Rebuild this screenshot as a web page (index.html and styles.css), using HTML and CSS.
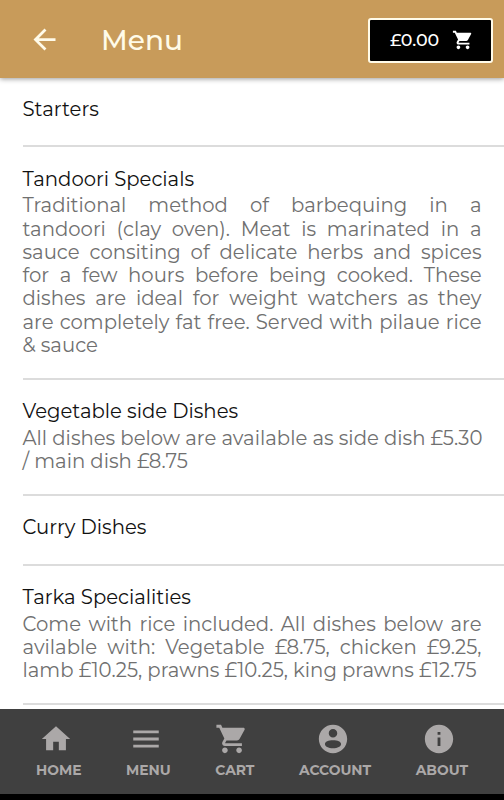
FILE: index.html
```
<!DOCTYPE html>
<html lang="en">
<head>
    <meta charset="UTF-8">
    <meta name="viewport" content="width=device-width, initial-scale=1.0">
    <title>Menu</title>
    <link rel="stylesheet" href="styles.css">
</head>
<body>
    <header class="header">
        <svg class="back" viewBox="0 0 24 24"><path d="M20 11H7.83l5.59-5.59L12 4l-8 8 8 8 1.41-1.41L7.83 13H20v-2z"/></svg>
        <h1>Menu</h1>
        <button class="basket">
            <span>£0.00</span>
            <svg viewBox="0 0 24 24"><path d="M7 18c-1.1 0-1.99.9-1.99 2S5.9 22 7 22s2-.9 2-2-.9-2-2-2zM1 2v2h2l3.6 7.59-1.35 2.45c-.16.28-.25.61-.25.96 0 1.1.9 2 2 2h12v-2H7.42c-.14 0-.25-.11-.25-.25l.03-.12.9-1.63h7.45c.75 0 1.41-.41 1.75-1.03l3.58-6.49c.08-.14.12-.31.12-.48 0-.55-.45-1-1-1H5.21l-.94-2H1zm16 16c-1.1 0-1.99.9-1.99 2s.89 2 1.99 2 2-.9 2-2-.9-2-2-2z"/></svg>
        </button>
    </header>

    <main class="list">
        <section class="category first">
            <h2>Starters</h2>
        </section>
        <section class="category">
            <h2>Tandoori Specials</h2>
            <p>
                <span>Traditional method of barbequing in a</span>
                <span>tandoori (clay oven). Meat is marinated in a</span>
                <span>sauce consiting of delicate herbs and spices</span>
                <span>for a few hours before being cooked. These</span>
                <span>dishes are ideal for weight watchers as they</span>
                <span>are completely fat free. Served with pilaue rice</span>
                <span class="last">&amp; sauce</span>
            </p>
        </section>
        <section class="category">
            <h2>Vegetable side Dishes</h2>
            <p>
                <span>All dishes below are available as side dish £5.30</span>
                <span class="last">/ main dish £8.75</span>
            </p>
        </section>
        <section class="category">
            <h2>Curry Dishes</h2>
        </section>
        <section class="category">
            <h2>Tarka Specialities</h2>
            <p>
                <span>Come with rice included. All dishes below are</span>
                <span>avilable with: Vegetable £8.75, chicken £9.25,</span>
                <span class="last">lamb £10.25, prawns £10.25, king prawns £12.75</span>
            </p>
        </section>
    </main>

    <nav class="tabs">
        <a class="tab">
            <svg viewBox="0 0 24 24"><path d="M10 20v-6h4v6h5v-8h3L12 3 2 12h3v8z"/></svg>
            <span>HOME</span>
        </a>
        <a class="tab">
            <svg viewBox="0 0 24 24"><path d="M3 18h18v-2H3v2zm0-5h18v-2H3v2zm0-7v2h18V6H3z"/></svg>
            <span>MENU</span>
        </a>
        <a class="tab">
            <svg viewBox="0 0 24 24"><path d="M7 18c-1.1 0-1.99.9-1.99 2S5.9 22 7 22s2-.9 2-2-.9-2-2-2zM1 2v2h2l3.6 7.59-1.35 2.45c-.16.28-.25.61-.25.96 0 1.1.9 2 2 2h12v-2H7.42c-.14 0-.25-.11-.25-.25l.03-.12.9-1.63h7.45c.75 0 1.41-.41 1.75-1.03l3.58-6.49c.08-.14.12-.31.12-.48 0-.55-.45-1-1-1H5.21l-.94-2H1zm16 16c-1.1 0-1.99.9-1.99 2s.89 2 1.99 2 2-.9 2-2-.9-2-2-2z"/></svg>
            <span>CART</span>
        </a>
        <a class="tab">
            <svg viewBox="0 0 24 24"><path d="M12 2C6.480 2 2 6.480 2 12s4.480 10 10 10 10-4.480 10-10S17.520 2 12 2zm0 3c1.660 0 3 1.340 3 3s-1.340 3-3 3-3-1.340-3-3 1.340-3 3-3zM12 18.600c-3.300 0-5.700-1.500-5.700-3.100s2.400-2.700 5.700-2.700 5.700 1.100 5.700 2.700-2.400 3.100-5.700 3.100z" fill-rule="evenodd"/></svg>
            <span>ACCOUNT</span>
        </a>
        <a class="tab">
            <svg viewBox="0 0 24 24"><path d="M12 2C6.480 2 2 6.480 2 12s4.480 10 10 10 10-4.480 10-10S17.520 2 12 2zm1 15h-2v-6h2v6zm0-8h-2V7h2v2z"/></svg>
            <span>ABOUT</span>
        </a>
    </nav>
</body>
</html>
```
FILE: styles.css
```
* {
    box-sizing: border-box;
}
body {
    font-family: Montserrat, Inter, "Open Sans", sans-serif;
    background-color: #fff;
    margin: 0;
    height: 800px;
    display: flex;
    flex-direction: column;
    overflow: hidden;
}
h1, h2, p {
    margin: 0;
    font-weight: 400;
}
svg {
    fill: currentColor;
    display: block;
    flex: none;
}
.header {
    flex: none;
    height: 78px;
    padding: 0 11px 0 28px;
    display: flex;
    align-items: center;
    background-color: #c89b5a;
    color: #fffbe9;
    box-shadow: 0 1px 5px rgba(0, 0, 0, 0.4);
}
.back {
    width: 33px;
    height: 33px;
}
.header h1 {
    margin: 1px 0 0 40px;
    font-size: 28px;
    font-weight: 500;
}
.basket {
    width: 125px;
    height: 45px;
    margin: 2px 0 0 auto;
    padding: 0 17px 0 20px;
    display: flex;
    align-items: center;
    justify-content: space-between;
    background-color: #000;
    color: #fff;
    border: 2px solid #fffbe9;
    border-radius: 3px;
    font-family: inherit;
    font-size: 17.5px;
    font-weight: 500;
}
.basket span {
    margin-top: -2px;
}
.basket svg {
    width: 22px;
    height: 22px;
    margin-top: -1px;
}
.list {
    flex: 1;
    min-height: 0;
    overflow: hidden;
    padding-left: 22.5px;
}
.category {
    padding: 18.5px 22.5px 20.5px 0;
    border-bottom: 2px solid #dcdcdc;
}
.category.first {
    padding-top: 18px;
    padding-bottom: 20.5px;
}
.category h2 {
    font-size: 19.65px;
    line-height: 26px;
    color: #111;
}
.category p {
    margin-top: 2.5px;
    font-size: 19.65px;
    line-height: 23.3px;
    color: #707070;
}
.category h2:last-child {
    margin-bottom: 2.8px;
}
/* every full line is stretched to the right margin */
.category p span {
    display: block;
    white-space: nowrap;
    text-align: justify;
    text-align-last: justify;
}
.category p .last {
    text-align-last: left;
}
.tabs {
    flex: none;
    height: 91px;
    padding: 13px 36px 0;
    display: flex;
    justify-content: space-between;
    background-color: #404040;
    border-bottom: 6px solid #000;
    color: #aba8a8;
}
.tab {
    display: flex;
    flex-direction: column;
    align-items: center;
    font-size: 13.9px;
    font-weight: 700;
    line-height: 16px;
}
.tab svg {
    width: 34px;
    height: 34px;
    margin: 0 5px 6px 0;
}
```
